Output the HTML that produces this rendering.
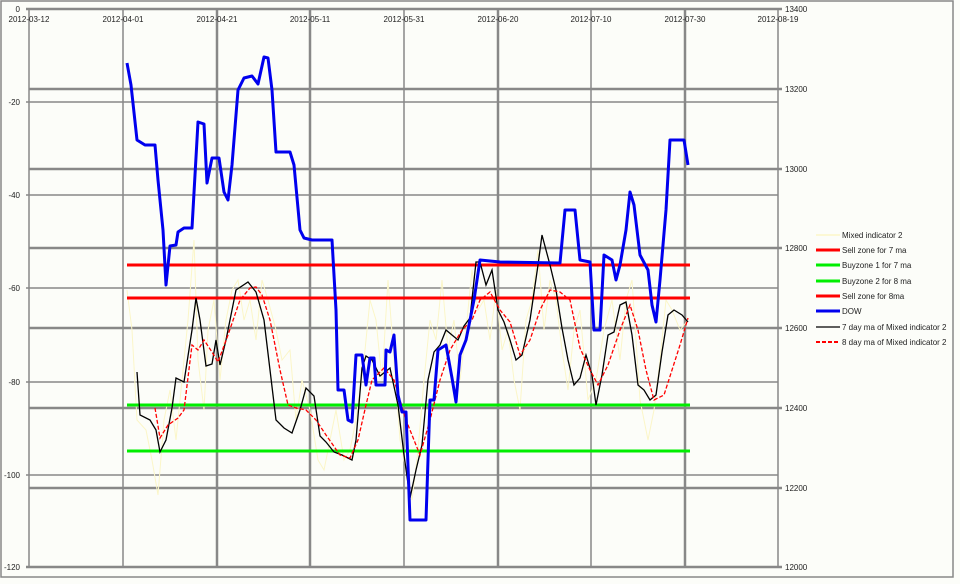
<!DOCTYPE html>
<html><head><meta charset="utf-8"><style>
html,body{margin:0;padding:0;background:#fcfdf9;}
svg{display:block}
text{font-family:"Liberation Sans",sans-serif;font-size:8px;fill:#222}
</style></head><body>
<svg width="960" height="584" viewBox="0 0 960 584" xmlns="http://www.w3.org/2000/svg">
<rect x="0" y="0" width="960" height="584" fill="#fcfdf9"/>
<rect x="1" y="1" width="952" height="576" fill="none" stroke="#888" stroke-width="1.5"/>
<g stroke="#888" stroke-width="1.5">
<line x1="29" y1="9" x2="29" y2="567"/>
<line x1="123" y1="9" x2="123" y2="567"/>
<line x1="217" y1="9" x2="217" y2="567" stroke-width="2.5"/>
<line x1="310" y1="9" x2="310" y2="567" stroke-width="2.5"/>
<line x1="404" y1="9" x2="404" y2="567"/>
<line x1="498" y1="9" x2="498" y2="567" stroke-width="2.5"/>
<line x1="591" y1="9" x2="591" y2="567"/>
<line x1="685" y1="9" x2="685" y2="567" stroke-width="2.5"/>
<line x1="778" y1="9" x2="778" y2="567"/>
<line x1="26" y1="102" x2="778" y2="102"/>
<line x1="26" y1="195" x2="778" y2="195"/>
<line x1="26" y1="288" x2="778" y2="288"/>
<line x1="26" y1="382" x2="778" y2="382"/>
<line x1="26" y1="475" x2="778" y2="475"/>
</g>
<g stroke="#888" stroke-width="2.5">
<line x1="26" y1="9" x2="782" y2="9"/>
<line x1="26" y1="567" x2="782" y2="567"/>
<line x1="29" y1="89" x2="782" y2="89"/>
<line x1="29" y1="169" x2="782" y2="169"/>
<line x1="29" y1="248" x2="782" y2="248"/>
<line x1="29" y1="328" x2="782" y2="328"/>
<line x1="29" y1="408" x2="782" y2="408"/>
<line x1="29" y1="488" x2="782" y2="488"/>
</g>
<g text-anchor="end">
<text x="20" y="12">0</text><text x="20" y="105">-20</text><text x="20" y="198">-40</text>
<text x="20" y="291">-60</text><text x="20" y="385">-80</text><text x="20" y="478">-100</text><text x="20" y="570">-120</text>
</g>
<g>
<text x="785" y="12">13400</text><text x="785" y="92">13200</text><text x="785" y="172">13000</text>
<text x="785" y="251">12800</text><text x="785" y="331">12600</text><text x="785" y="411">12400</text>
<text x="785" y="491">12200</text><text x="785" y="570">12000</text>
</g>
<g text-anchor="middle">
<text x="29" y="22">2012-03-12</text><text x="123" y="22">2012-04-01</text><text x="217" y="22">2012-04-21</text>
<text x="310" y="22">2012-05-11</text><text x="404" y="22">2012-05-31</text><text x="498" y="22">2012-06-20</text>
<text x="591" y="22">2012-07-10</text><text x="685" y="22">2012-07-30</text><text x="778" y="22">2012-08-19</text>
</g>
<polyline fill="none" stroke="#fbf6c8" stroke-width="1" points="127,290 132,330 137,420 146,430 152,460 158,495 164,420 170,390 176,440 182,380 188,320 194,240 198,360 204,410 208,330 214,300 220,380 226,320 232,290 238,280 244,320 250,300 256,340 262,280 268,300 276,330 282,360 290,350 296,420 302,380 310,410 318,460 324,470 330,440 336,410 344,460 350,450 356,420 364,360 370,300 376,320 382,380 388,280 394,360 400,440 406,470 412,500 418,450 424,380 430,320 436,340 442,280 448,350 454,320 460,380 466,330 472,270 478,310 484,300 490,340 496,290 502,350 508,330 514,380 520,410 526,320 532,300 538,250 544,330 550,280 556,300 562,350 568,390 574,330 580,310 588,400 596,380 604,330 612,300 620,360 626,300 632,280 640,400 648,440 654,410 660,360 666,300 672,310 680,330 688,320"/>
<g stroke-width="3">
<line x1="127" y1="265" x2="690" y2="265" stroke="#ff0000"/>
<line x1="127" y1="298" x2="690" y2="298" stroke="#ff0000"/>
<line x1="127" y1="405" x2="690" y2="405" stroke="#00ee00"/>
<line x1="127" y1="451" x2="690" y2="451" stroke="#00ee00"/>
</g>
<polyline fill="none" stroke="#000" stroke-width="1.3" points="137,372 140,415 150,420 156,430 160,452 166,440 172,408 176,378 184,382 192,330 196,298 200,320 206,366 212,364 216,340 220,365 226,340 236,290 248,282 256,292 264,320 270,370 276,420 284,428 292,433 300,410 306,388 314,396 320,436 326,442 334,452 342,455 352,460 356,440 362,368 366,356 372,360 380,376 390,368 398,405 404,455 410,498 416,470 422,445 428,380 434,352 440,345 446,330 452,335 458,340 464,326 470,318 476,262 480,262 486,285 492,270 498,310 504,322 510,340 516,360 522,355 530,320 538,265 542,235 550,265 556,290 562,328 568,360 574,385 580,378 586,355 592,375 596,405 602,375 608,335 614,332 620,305 626,302 632,335 638,385 644,390 650,400 656,395 662,352 668,315 674,310 682,315 688,322"/>
<polyline fill="none" stroke="#ff0000" stroke-width="1.3" stroke-dasharray="4,2" points="155,408 160,438 168,425 178,418 184,410 192,345 198,350 204,340 212,352 218,362 228,335 240,300 250,288 256,287 262,295 270,320 280,370 288,405 296,408 306,410 316,420 326,435 340,455 350,458 358,440 366,405 372,380 384,368 394,380 400,400 406,420 414,440 420,455 430,420 440,380 450,350 462,330 472,320 480,300 490,292 500,310 510,322 520,355 530,340 540,310 550,290 560,292 570,300 580,348 590,370 598,385 608,365 620,330 630,305 638,330 646,370 654,400 664,395 672,370 680,345 688,318"/>
<polyline fill="none" stroke="#0000ee" stroke-width="3" stroke-linejoin="round" points="127,63 131,85 137,140 145,145 155,145 158,180 163,230 166,285 170,246 176,245 178,232 184,228 192,228 195,175 198,122 204,124 207,183 212,158 219,158 224,192 228,200 232,165 238,90 244,78 252,76 258,84 264,57 268,58 272,90 276,152 290,152 294,165 300,230 304,238 312,240 330,240 332,240 336,310 338,390 344,390 348,420 352,422 356,355 362,355 366,385 370,358 374,358 376,385 385,385 386,350 390,352 394,335 398,395 402,412 406,412 410,520 426,520 430,400 434,400 438,350 446,345 452,378 456,402 460,355 466,340 470,320 474,300 480,260 500,262 560,263 565,210 575,210 580,260 590,262 594,330 600,330 604,255 612,260 616,280 620,265 626,230 630,192 634,205 640,255 648,270 652,305 656,322 660,280 666,210 670,140 684,140 688,165"/>
<g>
<line x1="816" y1="235" x2="840" y2="235" stroke="#fbf6c8" stroke-width="1.5"/><text x="842" y="238">Mixed indicator 2</text>
<line x1="816" y1="250" x2="840" y2="250" stroke="#ff0000" stroke-width="3"/><text x="842" y="253">Sell zone for 7 ma</text>
<line x1="816" y1="265" x2="840" y2="265" stroke="#00ee00" stroke-width="3"/><text x="842" y="268">Buyzone 1 for 7 ma</text>
<line x1="816" y1="281" x2="840" y2="281" stroke="#00ee00" stroke-width="3"/><text x="842" y="284">Buyzone 2 for 8 ma</text>
<line x1="816" y1="296" x2="840" y2="296" stroke="#ff0000" stroke-width="3"/><text x="842" y="299">Sell zone for 8ma</text>
<line x1="816" y1="311" x2="840" y2="311" stroke="#0000ee" stroke-width="3"/><text x="842" y="314">DOW</text>
<line x1="816" y1="327" x2="840" y2="327" stroke="#000" stroke-width="1.3"/><text x="842" y="330">7 day ma of Mixed indicator 2</text>
<line x1="816" y1="342" x2="840" y2="342" stroke="#ff0000" stroke-width="2" stroke-dasharray="4,2"/><text x="842" y="345">8 day ma of Mixed indicator 2</text>
</g>
</svg>
</body></html>
